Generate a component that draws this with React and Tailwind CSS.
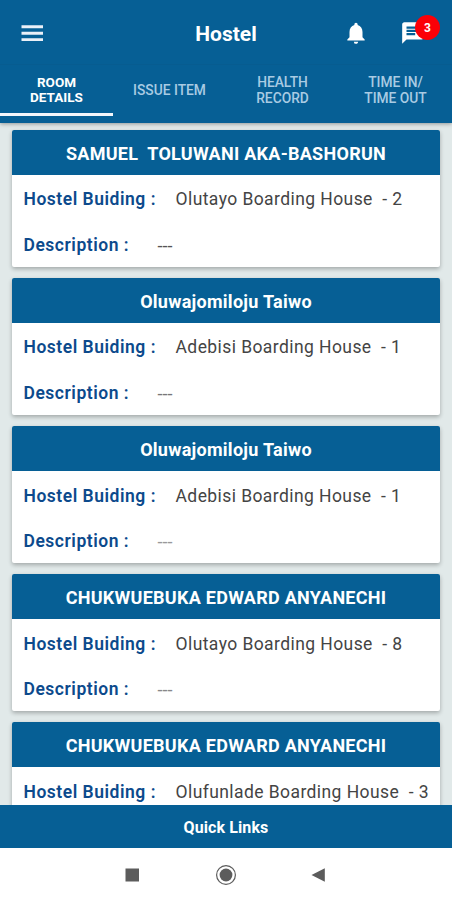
import React, { useState } from 'react';
import { MdNotifications, MdChat } from 'react-icons/md';

const TABS = [
  { id: 'room', lines: ['ROOM', 'DETAILS'] },
  { id: 'issue', lines: ['ISSUE ITEM'] },
  { id: 'health', lines: ['HEALTH', 'RECORD'] },
  { id: 'time', lines: ['TIME IN/', 'TIME OUT'] },
];

const ROOMS = [
  { name: 'SAMUEL  TOLUWANI AKA-BASHORUN', building: 'Olutayo Boarding House  - 2', description: '---', dash: 'text-[#555]' },
  { name: 'Oluwajomiloju Taiwo', building: 'Adebisi Boarding House  - 1', description: '---', dash: 'text-[#777]' },
  { name: 'Oluwajomiloju Taiwo', building: 'Adebisi Boarding House  - 1', description: '---', dash: 'text-[#999]' },
  { name: 'CHUKWUEBUKA EDWARD ANYANECHI', building: 'Olutayo Boarding House  - 8', description: '---', dash: 'text-[#888]' },
  { name: 'CHUKWUEBUKA EDWARD ANYANECHI', building: 'Olufunlade Boarding House  - 3' },
];

function RoomCard({ room }) {
  return (
    <div className="h-[136.7px] shrink-0 overflow-hidden rounded-[2px] bg-white shadow-[0_2px_4px_rgba(0,0,0,0.28)]">
      <div className="flex h-[45px] items-center justify-center bg-[#065f95] pt-px text-[18px] font-bold tracking-[0.27px] whitespace-pre text-white">
        {room.name}
      </div>
      <div className="flex h-[46px] items-center pt-[3px] pl-[11.5px] whitespace-pre">
        <span className="w-[152px] text-[17.5px] font-semibold tracking-[0.52px] text-[#0c4a8c]">Hostel Buiding :</span>
        <span className="text-[17.5px] tracking-[0.42px] text-[#444]">{room.building}</span>
      </div>
      {room.description && (
        <div className="flex h-[46px] items-center pt-[2px] pl-[11.5px] text-[18px]">
          <span className="w-[134px] text-[17.5px] font-semibold tracking-[0.52px] text-[#0c4a8c]">Description :</span>
          <span className={room.dash}>{room.description}</span>
        </div>
      )}
    </div>
  );
}

export default function App() {
  const [active, setActive] = useState('room');

  return (
    <div className="flex h-[900px] w-[452px] flex-col overflow-hidden bg-white font-[Roboto,sans-serif]">
      <div className="z-10 shrink-0 bg-[#065f95] text-white shadow-[0_1px_4px_rgba(0,0,0,0.35)]">
        {/* App bar */}
        <div className="grid h-[65px] grid-cols-3 items-center border-b border-[#075c90] pt-[2px]">
          <svg width="22" height="17" viewBox="0 0 22 17" className="ml-[21px]">
            <path d="M0.5 1.8h21.5M0.5 8.3h21.5M0.5 14.6h21.5" stroke="#eaf0f8" strokeWidth="2.9" />
          </svg>
          <h1 className="pt-[3px] text-center text-[21px] font-bold">Hostel</h1>
          <div className="flex items-center justify-end pr-[26px]">
            <MdNotifications className="mr-[31px] size-[26px]" />
            <div className="relative">
              <MdChat className="size-[26px]" />
              <span className="absolute -top-[5px] left-[15px] flex size-[25px] items-center justify-center rounded-full bg-[#fb0007] text-[12px] font-bold">
                3
              </span>
            </div>
          </div>
        </div>

        {/* Tabs */}
        <div className="grid h-[58px] grid-cols-4">
          {TABS.map((tab) => (
            <button
              key={tab.id}
              onClick={() => setActive(tab.id)}
              className={
                active === tab.id
                  ? 'mb-[7px] flex flex-col items-center justify-center border-b-[3px] border-[#f3f6fb] pt-[2px] text-[13.5px] leading-[15.5px] font-bold text-white'
                  : 'mb-[7px] flex flex-col items-center justify-center border-b-[3px] border-transparent pt-[3px] text-[13.8px] leading-[15.5px] font-medium text-[#a9cbe3]'
              }
            >
              {tab.lines.map((line) => (
                <span key={line}>{line}</span>
              ))}
            </button>
          ))}
        </div>
      </div>

      {/* Room list */}
      <div className="flex min-h-0 flex-1 flex-col gap-[11.4px] overflow-hidden bg-[#e1e9e9] px-3 pt-[7px]">
        {ROOMS.map((room, idx) => (
          <RoomCard key={idx} room={room} />
        ))}
      </div>

      <button className="h-[43px] shrink-0 bg-[#065f95] pt-[3px] text-[16px] font-bold tracking-[0.1px] text-white">
        Quick Links
      </button>

      {/* System navigation */}
      <div className="flex h-[52px] shrink-0 items-center justify-center gap-[73px] bg-white pt-px">
        <svg width="20" height="20" viewBox="0 0 20 20">
          <rect x="2.5" y="3.5" width="13.5" height="13" fill="#5c5c5c" />
        </svg>
        <svg width="20" height="20" viewBox="0 0 20 20" className="overflow-visible">
          <circle cx="10" cy="10" r="9.4" fill="none" stroke="#5c5c5c" strokeWidth="1.2" />
          <circle cx="10" cy="10" r="6.4" fill="#5c5c5c" />
        </svg>
        <svg width="20" height="20" viewBox="0 0 20 20">
          <path d="M2.5 10 15.8 3.2v13.6z" fill="#5c5c5c" />
        </svg>
      </div>
    </div>
  );
}
